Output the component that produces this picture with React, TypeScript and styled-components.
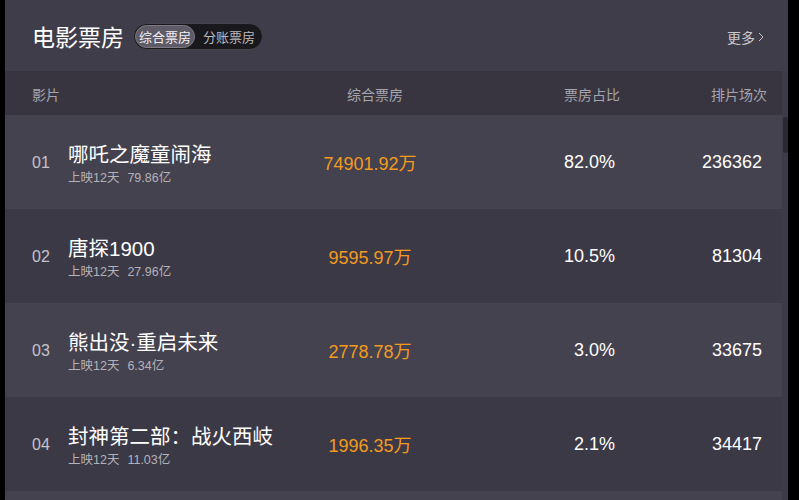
import React from "react";
import styled, { createGlobalStyle } from "styled-components";

const Global = createGlobalStyle`
  html, body { margin: 0; padding: 0; background: #000; }
  body { font-family: "Liberation Sans", "Noto Sans CJK SC", sans-serif; }
`;

const Frame = styled.div`
  margin-left: 5px;
  width: 783px;
  height: 500px;
  overflow: hidden;
  background: #3d3a47;
  display: flex;
  flex-direction: column;
`;

const TopBar = styled.div`
  height: 71px;
  flex: none;
  display: flex;
  align-items: center;
  padding: 0 24px 0 27px;
  background: #403d4a;
`;

const Title = styled.h1`
  margin: 0;
  font-size: 23px;
  font-weight: 400;
  color: #ffffff;
`;

const Toggle = styled.div`
  margin-left: 9px;
  display: flex;
  align-items: center;
  height: 27px;
  box-sizing: border-box;
  padding: 1px;
  border-radius: 14px;
  background: #19181d;
  border: 1px solid #45434d;
  margin-top: 1px;
`;

const Seg = styled.div<{ $active?: boolean }>`
  height: 23px;
  box-sizing: border-box;
  display: flex;
  align-items: center;
  font-size: 13px;
  border-radius: 12px;
  padding: ${(p) => (p.$active ? "0 3px" : "0 5px 0 7px")};
  color: ${(p) => (p.$active ? "#f2f2f4" : "#b9b8bf")};
  background: ${(p) => (p.$active ? "#5e5b67" : "transparent")};
  border: ${(p) => (p.$active ? "1px solid #7d7a86" : "1px solid transparent")};
`;

const More = styled.div`
  margin-left: auto;
  display: flex;
  align-items: center;
  gap: 3px;
  font-size: 14px;
  color: #c9c8ce;
  margin-top: 2px;
`;

const Body = styled.div`
  flex: 1;
  display: flex;
  min-height: 0;
`;

const Main = styled.div`
  flex: 1;
  display: flex;
  flex-direction: column;
  min-width: 0;
`;

const List = styled.div`
  flex: 1;
  display: flex;
  flex-direction: column;
  background: #45424f;
`;

const Track = styled.div`
  width: 6px;
  flex: none;
  background: #3e3b48;
  padding-top: 44px;
  box-sizing: border-box;
  display: flex;
  justify-content: center;
`;

const Thumb = styled.div`
  width: 5px;
  height: 36px;
  margin-top: 2px;
  border-radius: 3px;
  background: #2b2931;
`;

const Grid = styled.div<{ $pr: number }>`
  display: grid;
  grid-template-columns: 36px 1fr 140px 175px 147px;
  align-items: center;
  padding: 0 ${(p) => p.$pr}px 0 27px;
`;

const HeadRow = styled(Grid)`
  height: 44px;
  flex: none;
  background: #383541;
  font-size: 14px;
  color: #a6a5ad;
`;

const HeadCell = styled.div<{ $align: "left" | "center" | "right"; $span?: number }>`
  text-align: ${(p) => p.$align};
  grid-column: span ${(p) => p.$span || 1};
  padding-top: 2px;
`;

const Row = styled(Grid)<{ $odd: boolean }>`
  height: 94px;
  flex: none;
  background: ${(p) => (p.$odd ? "#45424f" : "#3c3946")};
`;

const Rank = styled.div`
  font-size: 16px;
  color: #c3c2c9;
  padding-top: 1px;
`;

const Film = styled.div`
  display: flex;
  flex-direction: column;
  gap: 2px;
  margin-top: 6px;
`;

const FilmName = styled.div`
  font-size: 20.5px;
  line-height: 24px;
  color: #ffffff;
`;

const FilmMeta = styled.div`
  font-size: 12.5px;
  line-height: 18px;
  color: #b3b2b9;
  display: flex;
  gap: 8px;
`;

const Gross = styled.div`
  text-align: center;
  font-size: 18px;
  color: #f39a1f;
`;

const Num = styled.div`
  text-align: right;
  font-size: 18px;
  color: #ffffff;
`;

const rows = [
  { rank: "01", name: "哪吒之魔童闹海", days: "上映12天", total: "79.86亿", gross: "74901.92万", pct: "82.0%", shows: "236362" },
  { rank: "02", name: "唐探1900", days: "上映12天", total: "27.96亿", gross: "9595.97万", pct: "10.5%", shows: "81304" },
  { rank: "03", name: "熊出没·重启未来", days: "上映12天", total: "6.34亿", gross: "2778.78万", pct: "3.0%", shows: "33675" },
  { rank: "04", name: "封神第二部：战火西岐", days: "上映12天", total: "11.03亿", gross: "1996.35万", pct: "2.1%", shows: "34417" },
];

export default function App() {
  return (
    <>
      <Global />
      <Frame>
        <TopBar>
          <Title>电影票房</Title>
          <Toggle>
            <Seg $active>综合票房</Seg>
            <Seg>分账票房</Seg>
          </Toggle>
          <More>
            更多
            <svg width="6" height="10" viewBox="0 0 6 10">
              <polyline points="1,1 5,5 1,9" fill="none" stroke="#c9c8ce" strokeWidth="1" />
            </svg>
          </More>
        </TopBar>
        <Body>
          <Main>
            <HeadRow $pr={15}>
              <HeadCell $align="left" $span={2}>影片</HeadCell>
              <HeadCell $align="center">综合票房</HeadCell>
              <HeadCell $align="right">票房占比</HeadCell>
              <HeadCell $align="right">排片场次</HeadCell>
            </HeadRow>
            <List>
              {rows.map((r, i) => (
                <Row key={r.rank} $pr={20} $odd={i % 2 === 0}>
                  <Rank>{r.rank}</Rank>
                  <Film>
                    <FilmName>{r.name}</FilmName>
                    <FilmMeta>
                      <span>{r.days}</span>
                      <span>{r.total}</span>
                    </FilmMeta>
                  </Film>
                  <Gross>{r.gross}</Gross>
                  <Num>{r.pct}</Num>
                  <Num>{r.shows}</Num>
                </Row>
              ))}
            </List>
          </Main>
          <Track>
            <Thumb />
          </Track>
        </Body>
      </Frame>
    </>
  );
}
